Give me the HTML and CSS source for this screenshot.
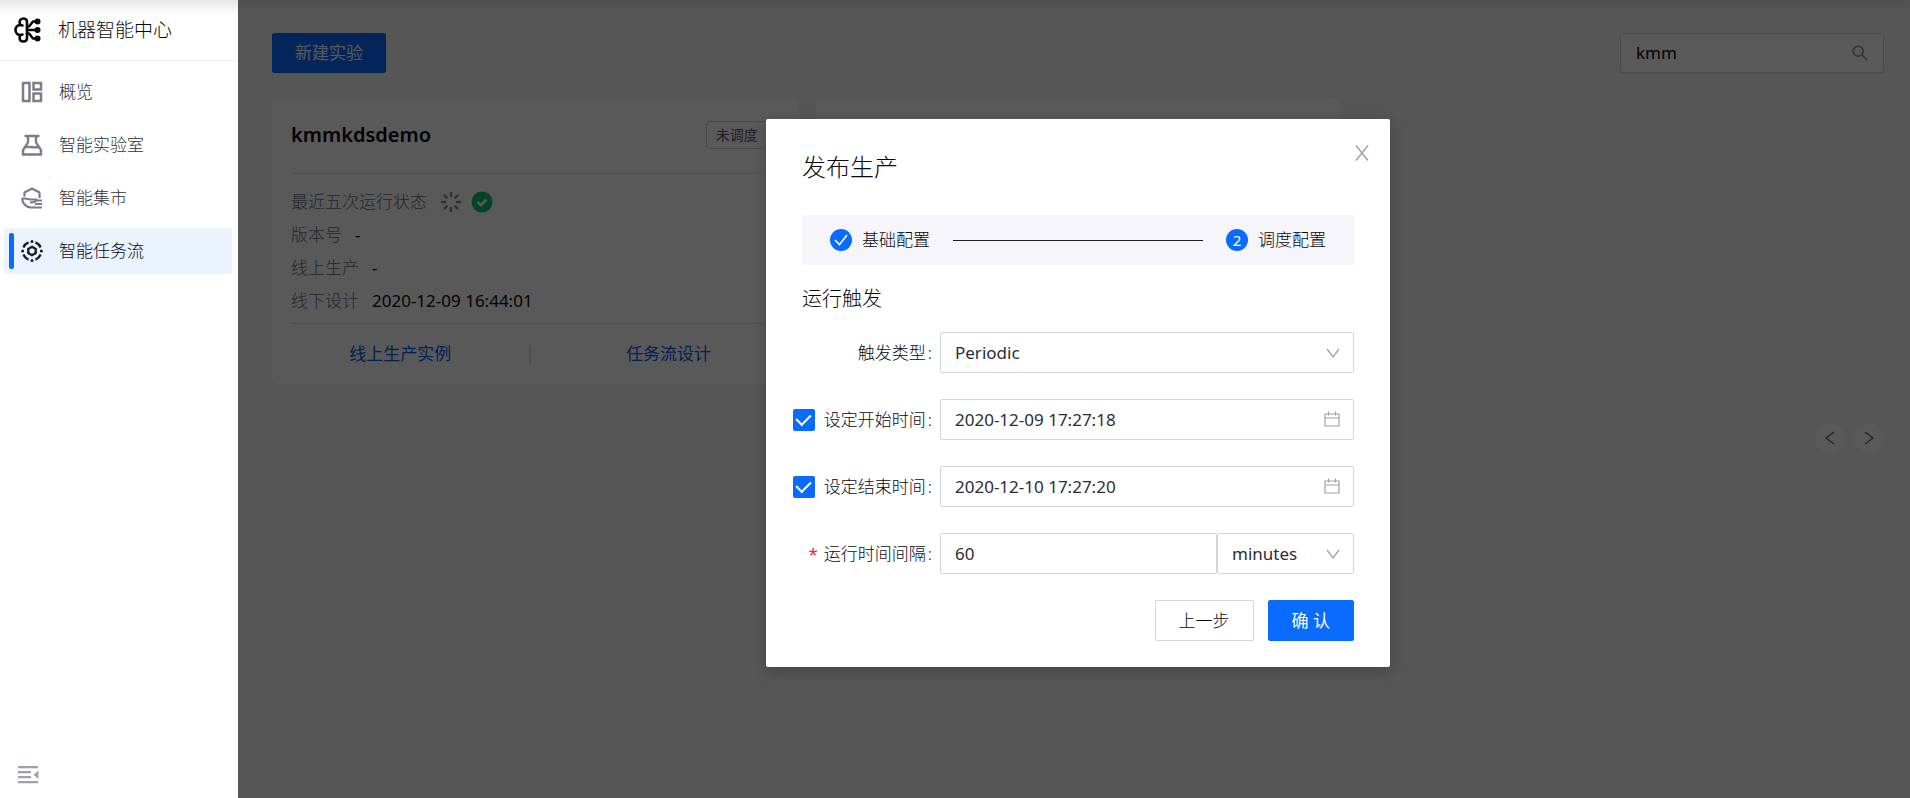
FILE: index.html
```html
<!DOCTYPE html>
<html lang="zh-CN">
<head>
<meta charset="utf-8">
<title>机器智能中心</title>
<link rel="stylesheet" href="styles.css">
</head>
<body>
<div class="app">
  <aside class="sidebar">
    <header class="brand">
      <svg class="brand-icon" viewBox="0 0 28 26" fill="none" stroke="currentColor" stroke-width="2.6" stroke-linecap="round" stroke-linejoin="round">
        <path d="M13 5C13 2.6 11.200 1.500 9.400 1.500C7 1.500 5.600 3.200 5.600 5.300C5.600 6.300 6 7.200 6.600 7.900C3.500 7.900 1.500 10.200 1.500 13C1.500 15.800 3.500 18 6.600 18.100C6 18.800 5.600 19.700 5.600 20.700C5.600 22.800 7 24.500 9.400 24.500C11.200 24.500 13 23.400 13 21ZM6.600 7.900L8.500 8.400M6.600 18.100L8.500 17.600"/>
        <path d="M13 13H21M13 9.500H15L19 4.500H22M13 16.500H15L19 21.500H22"/>
        <g fill="currentColor" stroke="none"><circle cx="23.500" cy="4.500" r="3"/><circle cx="23.500" cy="13" r="3"/><circle cx="23.500" cy="21.500" r="3"/></g>
      </svg>
      <h1 class="brand-name">机器智能中心</h1>
    </header>
    <nav class="menu">
      <a class="menu-item" href="#">
        <svg class="menu-icon" viewBox="0 0 22 22" fill="none" stroke="currentColor" stroke-width="2.500"><path d="M2 2H8.500V20H2ZM12.500 2H20V8.500H12.500ZM12.500 12.500H20V20H12.500Z"/></svg>
        概览</a>
      <a class="menu-item" href="#">
        <svg class="menu-icon" viewBox="0 0 22 22" fill="none" stroke="currentColor" stroke-width="2.400"><path d="M3.500 2H18.500M7 2V8.500L2 16V20.500H20V16L15 8.500V2M4.500 13.500C8 11.500 10.500 14.500 17.500 13"/></svg>
        智能实验室</a>
      <a class="menu-item" href="#">
        <svg class="menu-icon" viewBox="0 0 22 22" fill="none" stroke="currentColor" stroke-width="2.200" stroke-linejoin="round"><path d="M3.500 9.500V5.500L11 1.500L18.500 5.500V11M1 11.500H4C6 11.500 7.500 12.500 9 12.500H15.500C15.500 15 13 15.500 9 15.500M1 11.500C1.500 16 5 20.500 10 20.500H21M15.500 13.500H21M14 17H21"/></svg>
        智能集市</a>
      <a class="menu-item menu-item-active" href="#" aria-current="page">
        <svg class="menu-icon" viewBox="0 0 22 22" fill="none" stroke="currentColor" stroke-width="2.400"><path d="M11 6.800L14.700 8.900V13.100L11 15.200L7.300 13.100V8.900Z"/><path d="M14.500 2.400A9.300 9.300 0 0 1 19.600 7.500M19.600 14.500A9.300 9.300 0 0 1 14.500 19.600M7.500 19.600A9.300 9.300 0 0 1 2.400 14.500M2.400 7.500A9.300 9.300 0 0 1 7.500 2.400"/><g fill="currentColor" stroke="none"><circle cx="11" cy="1.600" r="1.500"/><circle cx="20.400" cy="11" r="1.500"/><circle cx="11" cy="20.400" r="1.500"/><circle cx="1.600" cy="11" r="1.500"/></g></svg>
        智能任务流</a>
    </nav>
    <button class="collapse" type="button" aria-label="收起">
      <svg class="collapse-icon" viewBox="0 0 22 18" fill="currentColor"><path d="M1 0H21V2.300H1ZM1 5H14V7.300H1ZM1 10H14V12.300H1ZM1 15H21V17.300H1ZM21.500 4.500V13L16.500 8.700Z"/></svg>
    </button>
  </aside>

  <main class="main">
    <div class="toolbar">
      <button class="btn btn-primary btn-new" type="button">新建实验</button>
      <label class="search">
        <input class="search-input" type="text" value="kmm" aria-label="搜索">
        <svg class="search-icon" viewBox="0 0 16 16" fill="none" stroke="currentColor" stroke-width="1.600"><circle cx="6.200" cy="6.200" r="5"/><path d="M10 10L15.300 15.300"/></svg>
      </label>
    </div>
    <div class="cards">
      <article class="card">
        <div class="card-head">
          <h2 class="card-title">kmmkdsdemo</h2>
          <span class="tag">未调度</span>
        </div>
        <dl class="card-body">
          <div class="fact"><dt>最近五次运行状态</dt><dd class="status">
            <svg class="status-icon" viewBox="0 0 22 22" fill="none" stroke="currentColor" stroke-width="2.400" stroke-linecap="round"><path d="M11 2V5M11 17V20M2 11H5M17 11H20M4.600 4.600L6.700 6.700M15.300 15.300L17.400 17.400M17.400 4.600L15.300 6.700M4.600 17.400L6.700 15.300"/></svg>
            <svg class="status-icon" viewBox="0 0 22 22"><circle class="status-ok" cx="11" cy="11" r="10.500"/><path d="M6.500 11L9.800 14.200L15.500 8.500" fill="none" stroke="#fff" stroke-width="2.600"/></svg>
          </dd></div>
          <div class="fact"><dt>版本号</dt><dd>-</dd></div>
          <div class="fact"><dt>线上生产</dt><dd>-</dd></div>
          <div class="fact"><dt>线下设计</dt><dd>2020-12-09 16:44:01</dd></div>
        </dl>
        <div class="card-links">
          <a class="link" href="#">线上生产实例</a>
          <span class="divider"></span>
          <a class="link" href="#">任务流设计</a>
        </div>
      </article>
      <article class="card"></article>
    </div>
    <div class="pager">
      <button class="pager-btn" type="button" aria-label="上一页"><svg class="pager-icon" viewBox="0 0 14 14" fill="none" stroke="currentColor" stroke-width="1.500"><path d="M11 1L3 7L11 13"/></svg></button>
      <button class="pager-btn" type="button" aria-label="下一页"><svg class="pager-icon" viewBox="0 0 14 14" fill="none" stroke="currentColor" stroke-width="1.500"><path d="M3 1L11 7L3 13"/></svg></button>
    </div>

    <div class="mask">
      <form class="modal" role="dialog" aria-labelledby="dialog-title">
        <button class="close" type="button" aria-label="关闭"><svg class="close-icon" viewBox="0 0 16 16" fill="none" stroke="currentColor" stroke-width="1.500"><path d="M2 .500L14 15.500M14 .500L2 15.500"/></svg></button>
        <h2 class="modal-title" id="dialog-title">发布生产</h2>
        <ol class="steps">
          <li class="step"><span class="step-dot"><svg class="step-check" viewBox="0 0 14 14" fill="none" stroke="currentColor" stroke-width="1.500"><path d="M1 7L5.500 11.500L13 2"/></svg></span>基础配置</li>
          <li class="step-line" role="presentation"></li>
          <li class="step"><span class="step-dot">2</span>调度配置</li>
        </ol>
        <h3 class="section-title">运行触发</h3>
        <div class="rows">
          <div class="row">
            <label class="row-label" for="trigger">触发类型<span class="colon">:</span></label>
            <div class="field">
              <select class="control" id="trigger"><option>Periodic</option></select>
              <svg class="field-icon" viewBox="0 0 14 14" fill="none" stroke="currentColor" stroke-width="1.300"><path d="M1 3L7 11L13 3"/></svg>
            </div>
          </div>
          <div class="row">
            <div class="row-label"><input class="check" type="checkbox" id="use-start" checked><label for="use-start">设定开始时间<span class="colon">:</span></label></div>
            <div class="field">
              <input class="control" type="text" value="2020-12-09 17:27:18" aria-label="开始时间">
              <svg class="field-icon field-icon-cal" viewBox="0 0 16 16" fill="none" stroke="currentColor" stroke-width="1.200"><path d="M1 3H15V15H1ZM1 7H15M4.500 .500V4.500M11.500 .500V4.500"/></svg>
            </div>
          </div>
          <div class="row">
            <div class="row-label"><input class="check" type="checkbox" id="use-end" checked><label for="use-end">设定结束时间<span class="colon">:</span></label></div>
            <div class="field">
              <input class="control" type="text" value="2020-12-10 17:27:20" aria-label="结束时间">
              <svg class="field-icon field-icon-cal" viewBox="0 0 16 16" fill="none" stroke="currentColor" stroke-width="1.200"><path d="M1 3H15V15H1ZM1 7H15M4.500 .500V4.500M11.500 .500V4.500"/></svg>
            </div>
          </div>
          <div class="row">
            <label class="row-label" for="interval"><span class="required">*</span>运行时间间隔<span class="colon">:</span></label>
            <div class="pair">
              <div class="field"><input class="control" type="text" id="interval" value="60"></div>
              <div class="field">
                <select class="control" aria-label="时间单位"><option>minutes</option></select>
                <svg class="field-icon" viewBox="0 0 14 14" fill="none" stroke="currentColor" stroke-width="1.300"><path d="M1 3L7 11L13 3"/></svg>
              </div>
            </div>
          </div>
        </div>
        <div class="actions">
          <button class="btn btn-default" type="button">上一步</button>
          <button class="btn btn-primary" type="submit">确 认</button>
        </div>
      </form>
    </div>
  </main>
</div>
</body>
</html>
```
FILE: styles.css
```css
* { box-sizing: border-box; }

body {
  margin: 0;
  font: 300 17px/24px "Noto Sans", "Noto Sans CJK SC", sans-serif;
  color: #08080f;
}

h1, h2, h3, dl, dd, ol { margin: 0; padding: 0; font-weight: inherit; }
a { text-decoration: none; }
svg { display: block; flex: none; }
button, input, select { font: inherit; color: inherit; }
button { cursor: pointer; }

.app { display: flex; min-height: 100vh; }

/* Sidebar */
.sidebar {
  display: flex;
  flex-direction: column;
  width: 238px;
  flex: none;
  background: linear-gradient(#e8e8e8, #fff 16px);
}
.brand {
  display: flex;
  align-items: center;
  gap: 16px;
  height: 61px;
  padding: 0 0 1px 14px;
  border-bottom: 1px solid #ebebf0;
}
.brand-icon { width: 28px; height: 26px; }
.brand-name { font-size: 19px; }
.menu { display: flex; flex-direction: column; gap: 7px; padding: 8px 6px 0 4px; }
.menu-item {
  display: flex;
  align-items: center;
  gap: 16px;
  height: 46px;
  padding-left: 17px;
  border-radius: 3px;
  color: #30303c;
}
.menu-icon { width: 22px; height: 22px; color: #7c7c8c; }
.menu-item-active {
  padding-left: 5px;
  gap: 7px;
  background: #ebf3ff;
  color: #08080f;
}
.menu-item-active::before {
  content: "";
  width: 5px;
  height: 36px;
  border-radius: 2px;
  background: #0a6cff;
}
.menu-item-active .menu-icon { margin-right: 9px; color: #1c1c28; }
.collapse {
  align-self: flex-start;
  margin: auto 0 14px 17px;
  padding: 0;
  border: 0;
  background: none;
  color: #a0a0b0;
}
.collapse-icon { width: 22px; height: 18px; }

/* Workspace */
.main {
  position: relative;
  flex: 1;
  min-width: 0;
  padding: 33px 26px 33px 34px;
  background: linear-gradient(#e4e4e6, #f5f5f7 14px);
}
.toolbar { display: flex; justify-content: space-between; }
.btn {
  height: 41px;
  padding: 0 23px;
  border: 1px solid #d5d5de;
  border-radius: 2px;
  background: #fff;
}
.btn-primary { border-color: #0a6cff; background: #0a6cff; color: #fff; font-weight: 400; }
.btn-new { height: 40px; padding: 0 22px; }
.search {
  display: flex;
  align-items: center;
  width: 264px;
  height: 40px;
  padding: 0 15px;
  border: 1px solid #d5d5de;
  border-radius: 3px;
  background: #fff;
}
.search-input { flex: 1; min-width: 0; padding: 0; border: 0; outline: 0; background: none; font-weight: 400; }
.search-icon { width: 16px; height: 16px; color: #8c8c9c; }

.cards {
  display: grid;
  grid-template-columns: repeat(3, 1fr);
  gap: 19px;
  margin-top: 24px;
}
.card { padding: 0 19px; border-radius: 6px; background: #fff; }
.card-head {
  display: flex;
  align-items: center;
  justify-content: space-between;
  height: 77px;
  border-bottom: 1px solid #e2e2ea;
}
.card-title { font-size: 20px; font-weight: 600; }
.tag {
  width: 72px;
  padding: 1px 9px;
  border: 1px solid #d0d0da;
  border-radius: 4px;
  font-size: 14px;
  font-weight: 400;
  color: #5a5a68;
}
.card-body { padding: 11px 0 6px; border-bottom: 1px solid #e2e2ea; }
.fact { display: flex; align-items: center; gap: 13px; height: 33px; }
.fact dt { color: #6c6c7c; }
.fact dd { font-weight: 400; }
.status { display: flex; gap: 9px; }
.status-icon { width: 22px; height: 22px; color: #8c8c9c; }
.status-ok { fill: #0cc267; }
.card-links { display: flex; align-items: center; height: 60px; }
.link { flex: 1; text-align: center; color: #0060f0; font-weight: 400; }
.divider { width: 2px; height: 18px; margin: 0 28px 0 20px; background: #e2e2ea; }

.pager { display: flex; justify-content: flex-end; gap: 9px; margin-top: 39px; }
.pager-btn {
  display: grid;
  place-items: center;
  width: 30px;
  height: 30px;
  padding: 0;
  border: 0;
  border-radius: 50%;
  background: #fff;
  color: #6c6c7c;
}
.pager-icon { width: 14px; height: 14px; }

/* Dialog */
.mask {
  position: absolute;
  inset: 0;
  display: flex;
  justify-content: center;
  align-items: flex-start;
  padding: 119px 0 0 8px;
  background: rgba(0, 0, 0, .65);
}
.modal {
  position: relative;
  width: 624px;
  padding: 32px 36px 26px;
  border-radius: 2px;
  background: #fff;
  box-shadow: 0 4px 14px rgba(0, 0, 0, .2);
}
.close {
  position: absolute;
  top: 26px;
  right: 20px;
  padding: 0;
  border: 0;
  background: none;
  color: #a0a0ae;
}
.close-icon { width: 16px; height: 16px; }
.modal-title { font-size: 24px; line-height: 32px; }
.steps {
  display: flex;
  align-items: center;
  gap: 23px;
  height: 50px;
  margin-top: 32px;
  padding: 0 28px;
  background: #f5f5fa;
  list-style: none;
}
.step { display: flex; align-items: center; gap: 10px; }
.step-dot {
  display: grid;
  place-items: center;
  width: 22px;
  height: 22px;
  border-radius: 50%;
  background: #0a6cff;
  color: #fff;
  font-size: 15px;
  line-height: 20px;
  font-weight: 400;
}
.step-check { width: 14px; height: 14px; }
.step-line { flex: 1; height: 1px; background: #1c1c28; }
.section-title { margin-top: 20px; font-size: 20px; line-height: 28px; }
.rows { display: flex; flex-direction: column; gap: 26px; margin-top: 19px; }
.row { display: flex; }
.row-label {
  display: flex;
  align-items: center;
  justify-content: flex-end;
  width: 148px;
  margin-left: -10px;
  padding-right: 8px;
  white-space: nowrap;
}
.colon { margin-left: 2px; }
.check {
  display: grid;
  place-items: center;
  flex: none;
  appearance: none;
  width: 22px;
  height: 22px;
  margin: 0 9px 0 0;
  border-radius: 2px;
  background: #0a6cff;
}
.check:checked::after {
  content: "";
  width: 7px;
  height: 12px;
  margin-bottom: 3px;
  border: solid #fff;
  border-width: 0 2px 2px 0;
  transform: rotate(45deg);
}
.required { margin-right: 6px; color: #f5222d; font-weight: 400; }
.field { position: relative; flex: 1; min-width: 0; }
.control {
  appearance: none;
  display: block;
  width: 100%;
  height: 41px;
  padding: 0 14px;
  border: 1px solid #d5d5de;
  border-radius: 2px;
  background: #fff;
  color: #2c2c38;
  font-weight: 400;
}
.field-icon {
  position: absolute;
  top: 14px;
  right: 14px;
  width: 14px;
  height: 14px;
  color: #a0a0b0;
  pointer-events: none;
}
.field-icon-cal { top: 12px; width: 16px; height: 16px; }
.pair { display: grid; grid-template-columns: 277fr 137fr; flex: 1; min-width: 0; }
.actions { display: flex; justify-content: flex-end; gap: 14px; margin-top: 26px; }
```
